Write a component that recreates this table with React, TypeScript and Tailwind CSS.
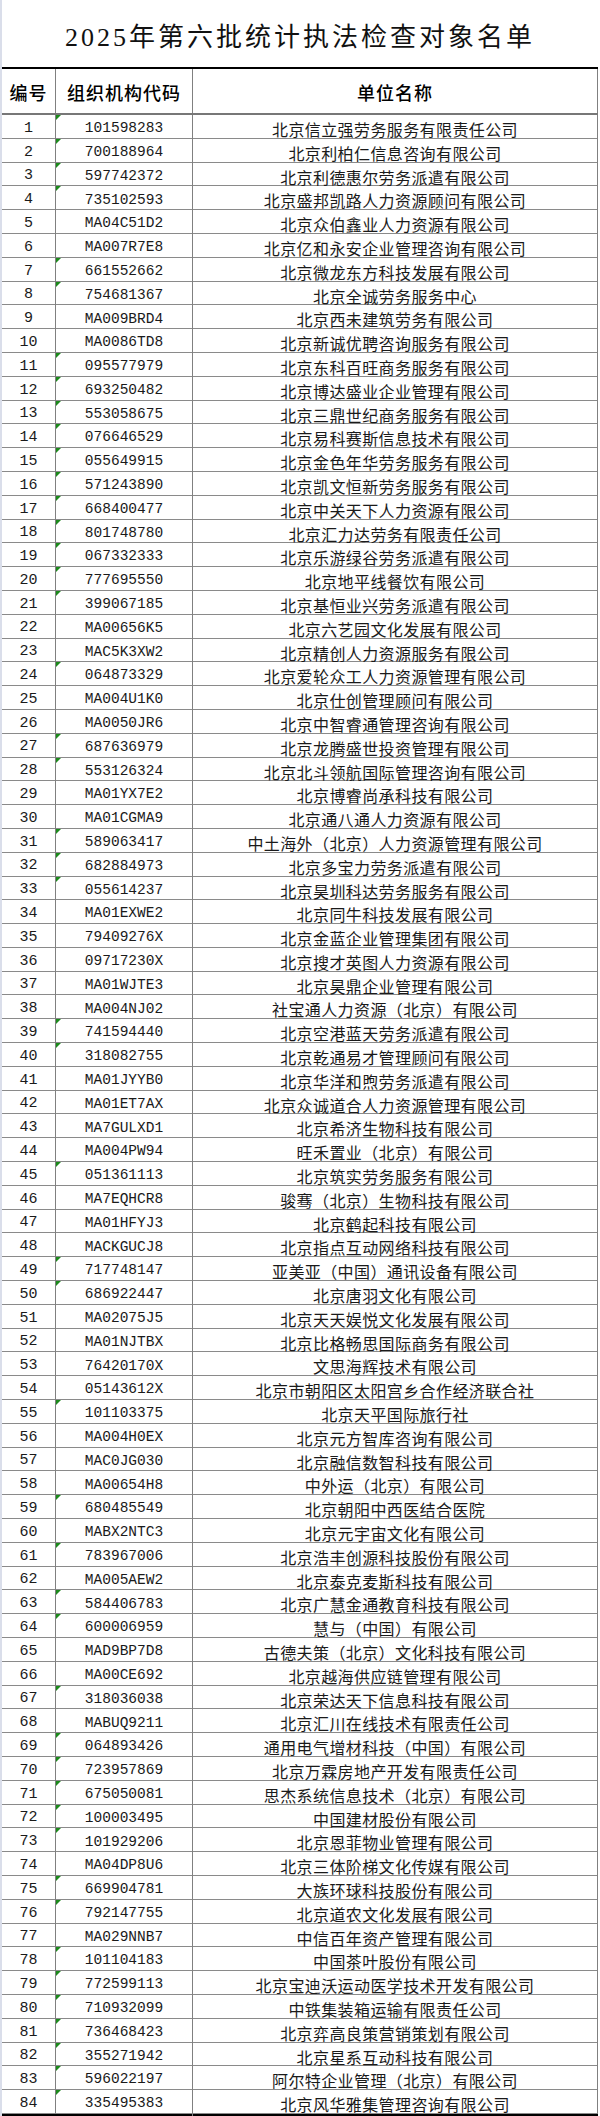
import React from "react";

const rows: [string, string][] = [
  ["101598283", "北京信立强劳务服务有限责任公司"],
  ["700188964", "北京利柏仁信息咨询有限公司"],
  ["597742372", "北京利德惠尔劳务派遣有限公司"],
  ["735102593", "北京盛邦凯路人力资源顾问有限公司"],
  ["MA04C51D2", "北京众伯鑫业人力资源有限公司"],
  ["MA007R7E8", "北京亿和永安企业管理咨询有限公司"],
  ["661552662", "北京微龙东方科技发展有限公司"],
  ["754681367", "北京全诚劳务服务中心"],
  ["MA009BRD4", "北京西未建筑劳务有限公司"],
  ["MA0086TD8", "北京新诚优聘咨询服务有限公司"],
  ["095577979", "北京东科百旺商务服务有限公司"],
  ["693250482", "北京博达盛业企业管理有限公司"],
  ["553058675", "北京三鼎世纪商务服务有限公司"],
  ["076646529", "北京易科赛斯信息技术有限公司"],
  ["055649915", "北京金色年华劳务服务有限公司"],
  ["571243890", "北京凯文恒新劳务服务有限公司"],
  ["668400477", "北京中关天下人力资源有限公司"],
  ["801748780", "北京汇力达劳务有限责任公司"],
  ["067332333", "北京乐游绿谷劳务派遣有限公司"],
  ["777695550", "北京地平线餐饮有限公司"],
  ["399067185", "北京基恒业兴劳务派遣有限公司"],
  ["MA00656K5", "北京六艺园文化发展有限公司"],
  ["MAC5K3XW2", "北京精创人力资源服务有限公司"],
  ["064873329", "北京爱轮众工人力资源管理有限公司"],
  ["MA004U1K0", "北京仕创管理顾问有限公司"],
  ["MA0050JR6", "北京中智睿通管理咨询有限公司"],
  ["687636979", "北京龙腾盛世投资管理有限公司"],
  ["553126324", "北京北斗领航国际管理咨询有限公司"],
  ["MA01YX7E2", "北京博睿尚承科技有限公司"],
  ["MA01CGMA9", "北京通八通人力资源有限公司"],
  ["589063417", "中土海外（北京）人力资源管理有限公司"],
  ["682884973", "北京多宝力劳务派遣有限公司"],
  ["055614237", "北京昊圳科达劳务服务有限公司"],
  ["MA01EXWE2", "北京同牛科技发展有限公司"],
  ["79409276X", "北京金蓝企业管理集团有限公司"],
  ["09717230X", "北京搜才英图人力资源有限公司"],
  ["MA01WJTE3", "北京昊鼎企业管理有限公司"],
  ["MA004NJ02", "社宝通人力资源（北京）有限公司"],
  ["741594440", "北京空港蓝天劳务派遣有限公司"],
  ["318082755", "北京乾通易才管理顾问有限公司"],
  ["MA01JYYB0", "北京华洋和煦劳务派遣有限公司"],
  ["MA01ET7AX", "北京众诚道合人力资源管理有限公司"],
  ["MA7GULXD1", "北京希济生物科技有限公司"],
  ["MA004PW94", "旺禾置业（北京）有限公司"],
  ["051361113", "北京筑实劳务服务有限公司"],
  ["MA7EQHCR8", "骏骞（北京）生物科技有限公司"],
  ["MA01HFYJ3", "北京鹤起科技有限公司"],
  ["MACKGUCJ8", "北京指点互动网络科技有限公司"],
  ["717748147", "亚美亚（中国）通讯设备有限公司"],
  ["686922447", "北京唐羽文化有限公司"],
  ["MA02075J5", "北京天天娱悦文化发展有限公司"],
  ["MA01NJTBX", "北京比格畅思国际商务有限公司"],
  ["76420170X", "文思海辉技术有限公司"],
  ["05143612X", "北京市朝阳区太阳宫乡合作经济联合社"],
  ["101103375", "北京天平国际旅行社"],
  ["MA004H0EX", "北京元方智库咨询有限公司"],
  ["MAC0JG030", "北京融信数智科技有限公司"],
  ["MA00654H8", "中外运（北京）有限公司"],
  ["680485549", "北京朝阳中西医结合医院"],
  ["MABX2NTC3", "北京元宇宙文化有限公司"],
  ["783967006", "北京浩丰创源科技股份有限公司"],
  ["MA005AEW2", "北京泰克麦斯科技有限公司"],
  ["584406783", "北京广慧金通教育科技有限公司"],
  ["600006959", "慧与（中国）有限公司"],
  ["MAD9BP7D8", "古德夫策（北京）文化科技有限公司"],
  ["MA00CE692", "北京越海供应链管理有限公司"],
  ["318036038", "北京荣达天下信息科技有限公司"],
  ["MABUQ9211", "北京汇川在线技术有限责任公司"],
  ["064893426", "通用电气增材科技（中国）有限公司"],
  ["723957869", "北京万霖房地产开发有限责任公司"],
  ["675050081", "思杰系统信息技术（北京）有限公司"],
  ["100003495", "中国建材股份有限公司"],
  ["101929206", "北京恩菲物业管理有限公司"],
  ["MA04DP8U6", "北京三体阶梯文化传媒有限公司"],
  ["669904781", "大族环球科技股份有限公司"],
  ["792147755", "北京道农文化发展有限公司"],
  ["MA029NNB7", "中信百年资产管理有限公司"],
  ["101104183", "中国茶叶股份有限公司"],
  ["772599113", "北京宝迪沃运动医学技术开发有限公司"],
  ["710932099", "中铁集装箱运输有限责任公司"],
  ["736468423", "北京弈高良策营销策划有限公司"],
  ["355271942", "北京星系互动科技有限公司"],
  ["596022197", "阿尔特企业管理（北京）有限公司"],
  ["335495383", "北京风华雅集管理咨询有限公司"],
];

const mono = "font-['Liberation_Mono','Noto_Sans_CJK_SC',monospace]";
const cjk = "font-['Noto_Sans_CJK_SC','Noto_Sans',sans-serif]";

export default function App() {
  return (
    <div className="w-[600px] h-[2116px] bg-white flex overflow-hidden">
      <div className="w-[2px] h-full bg-[#dadeea] shrink-0" />
      <div className="w-[596px] shrink-0 flex flex-col">
        <div
          className={`h-[67px] flex items-center justify-center pt-[8px] text-[26px] tracking-[3px] text-[#111] font-['Liberation_Serif','Noto_Sans_CJK_SC',serif]`}
        >
          2025年第六批统计执法检查对象名单
        </div>
        <div className="h-[2px] bg-black" />
        <div
          className={`grid grid-cols-[54px_137px_405px] h-[46px] border-b-2 border-[#777] ${cjk} text-[18px] font-medium text-black`}
        >
          <div className="border-r border-[#808080] flex items-center justify-center pt-[3px] tracking-[1px]">
            编号
          </div>
          <div className="border-r border-[#808080] flex items-center justify-center pt-[3px] tracking-[1px]">
            组织机构代码
          </div>
          <div className="border-r border-[#808080] flex items-center justify-center pt-[3px] tracking-[1px]">
            单位名称
          </div>
        </div>
        {rows.map(([code, name], i) => (
          <div
            key={i}
            className="grid grid-cols-[54px_137px_405px] h-[23.8px] border-b border-[#8a8a8a] text-[#1a1a1a]"
          >
            <div
              className={`border-r border-[#808080] flex items-center justify-center pt-[2px] text-[15px] ${mono}`}
            >
              {i + 1}
            </div>
            <div
              className={`relative border-r border-[#808080] flex items-center justify-center pt-[2px] text-[14.5px] ${mono}`}
            >
              {/^\d+$/.test(code) && (
                <span className="absolute left-0 top-0 w-0 h-0 border-t-[5px] border-t-[#1c8a1c] border-r-[5px] border-r-transparent" />
              )}
              {code}
            </div>
            <div
              className={`border-r border-[#808080] flex items-center justify-center pt-[2px] text-[16px] tracking-[0.4px] whitespace-nowrap ${cjk}`}
            >
              {name}
            </div>
          </div>
        ))}
        <div className="h-[2px] bg-black" />
      </div>
    </div>
  );
}
